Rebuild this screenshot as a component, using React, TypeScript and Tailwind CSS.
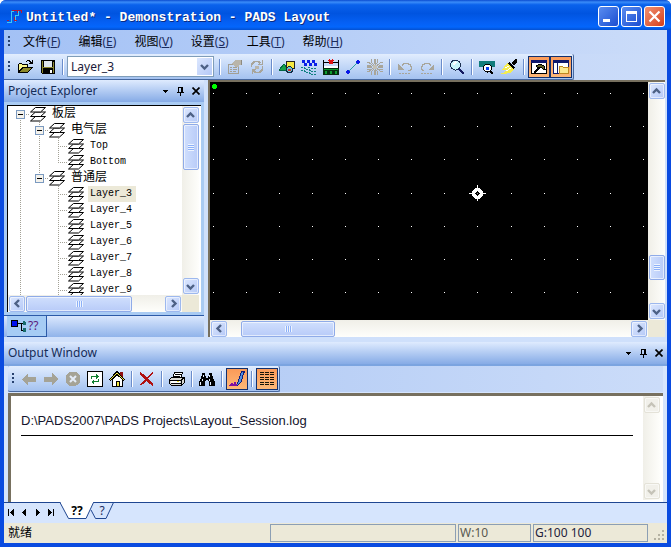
import type { ReactNode } from 'react';

const UI = "font-['Noto_Sans','Noto_Sans_CJK_SC',sans-serif]";

/* ---------- shared pieces ---------- */

type Dir = 'up' | 'down' | 'left' | 'right';

const chevrons: Record<Dir, string> = {
  up: 'M1 6L4.5 2.5L8 6',
  down: 'M1 3L4.5 6.5L8 3',
  left: 'M6 1L2.5 4.5L6 8',
  right: 'M3 1L6.5 4.5L3 8',
};

function Chevron({ dir, color = '#4d6185' }: { dir: Dir; color?: string }) {
  return (
    <svg width="9" height="9" viewBox="0 0 9 9" fill="none" aria-hidden="true">
      <path d={chevrons[dir]} stroke={color} strokeWidth="2.4" />
    </svg>
  );
}

function ScrollButton({ dir, disabled }: { dir: Dir; disabled?: boolean }) {
  const look = disabled
    ? 'border-[#e4e2d8] bg-[#f1f0ea]'
    : 'border-[#9db8ee] bg-gradient-to-br from-[#dce7fe] to-[#b5c9f7]';
  return (
    <button
      type="button"
      aria-label={`Scroll ${dir}`}
      disabled={disabled}
      className={`flex size-4 shrink-0 items-center justify-center rounded-xs border shadow-[inset_0_0_0_1px_#fff8] ${look}`}
    >
      <Chevron dir={dir} color={disabled ? '#c5c3b8' : undefined} />
    </button>
  );
}

function Scrollbar({ vertical, before, thumb, disabled }: { vertical?: boolean; before: string; thumb: string; disabled?: boolean }) {
  return (
    <div
      className={
        vertical
          ? 'flex w-[17px] shrink-0 flex-col items-center bg-gradient-to-r from-[#f0efe8] to-[#fefefb] py-px'
          : 'flex h-[17px] min-w-0 flex-1 items-center bg-gradient-to-b from-[#f0efe8] to-[#fefefb] px-px'
      }
    >
      <ScrollButton dir={vertical ? 'up' : 'left'} disabled={disabled} />
      <div className={`shrink-0 ${before}`} />
      {!disabled && (
        <div
          className={`flex shrink-0 items-center justify-center rounded-xs border border-[#8fabe8] from-[#d0dffd] to-[#b8cbf8] shadow-[inset_0_0_0_1px_#fff9] ${
            vertical ? 'w-4 bg-gradient-to-r' : 'h-4 bg-gradient-to-b'
          } ${thumb}`}
        >
          <div
            className={
              vertical
                ? 'h-[7px] w-[6px] bg-[repeating-linear-gradient(180deg,#eef4fe_0_1px,#8cb0f8_1px_2px)]'
                : 'h-[6px] w-[7px] bg-[repeating-linear-gradient(90deg,#eef4fe_0_1px,#8cb0f8_1px_2px)]'
            }
          />
        </div>
      )}
      <div className="flex-1" />
      <ScrollButton dir={vertical ? 'down' : 'right'} disabled={disabled} />
    </div>
  );
}

function Grip() {
  return (
    <div className="mx-1 h-3 w-[2px] bg-[repeating-linear-gradient(180deg,#27416f_0_2px,transparent_2px_4px)]" />
  );
}

function Separator() {
  return <div className="mx-[3px] h-4 w-[2px] shrink-0 border-l border-[#6a8ccb] bg-white" />;
}

function Tool({ name, on, off, children }: { name: string; on?: boolean; off?: boolean; children: ReactNode }) {
  return (
    <button
      type="button"
      aria-label={name}
      aria-pressed={on}
      disabled={off}
      className={`flex size-[22px] shrink-0 items-center justify-center border ${
        on ? 'border-[#12306e] bg-gradient-to-b from-[#fb9a58] to-[#fdb878]' : 'border-transparent'
      }`}
    >
      <svg width="16" height="16" viewBox="0 0 16 16" fill="none" shapeRendering="crispEdges" aria-hidden="true">
        {children}
      </svg>
    </button>
  );
}

function PanelHeader({ title }: { title: string }) {
  return (
    <header className="flex h-[22px] shrink-0 items-center bg-gradient-to-b from-[#dfebfe] to-[#86abe6] pr-px pl-1">
      <h2 className={`${UI} flex-1 text-[12px] leading-4 text-[#152c57]`}>{title}</h2>
      <button type="button" aria-label="Panel menu" className="flex h-4 w-[15px] items-center justify-center">
        <svg width="5" height="3" shapeRendering="crispEdges"><path d="M0 0H5L2.5 3Z" fill="#000" /></svg>
      </button>
      <button type="button" aria-label="Pin" className="flex h-4 w-[15px] items-center justify-center">
        <svg width="7" height="9" shapeRendering="crispEdges">
          <path d="M1 0h5v5h1v1H4v3H3V6H0V5h1zM2 1v4h2V1z" fill="#000" fillRule="evenodd" />
        </svg>
      </button>
      <button type="button" aria-label="Close panel" className="flex h-4 w-[15px] items-center justify-center">
        <svg width="8" height="8"><path d="M0.5 0.5L7.5 7.5M7.5 0.5L0.5 7.5" stroke="#000" strokeWidth="1.7" /></svg>
      </button>
    </header>
  );
}

/* ---------- title and menus ---------- */

function TitleBar() {
  const box = 'flex size-[21px] items-center justify-center rounded-[3px] border border-white';
  return (
    <header className="flex h-[30px] shrink-0 items-center bg-[linear-gradient(180deg,#0a4bd0_0,#3a8cf8_7%,#0a62ec_16%,#0054e0_45%,#0560f4_75%,#0366fc_90%,#0450d0_100%)] px-[6px] pt-[2px]">
      <svg width="16" height="16" viewBox="0 0 16 16" fill="none" shapeRendering="crispEdges" aria-hidden="true">
        <path d="M1 14.500h4.500V3.500H8" stroke="#3cc8f4" />
        <path d="M9.500 14V7.500h3V2" stroke="#3cc8f4" />
        <path d="M1 12.500h2M6 2.500h5.500V5M12 2.500h3V5M8.500 9v3h2" stroke="#b01c38" />
      </svg>
      <h1 className="ml-1 flex-1 truncate pt-1 font-['Liberation_Mono',monospace] text-[13px] leading-5 font-bold text-white [text-shadow:1px_1px_#0a2a80]">
        Untitled* - Demonstration - PADS Layout
      </h1>
      <div className="flex gap-[2px]">
        <button type="button" aria-label="Minimize" className={`${box} bg-gradient-to-br from-[#5a8cf0] to-[#1c4cd0]`}>
          <svg width="13" height="13"><path d="M1 9h7v3H1z" fill="#fff" /></svg>
        </button>
        <button type="button" aria-label="Maximize" className={`${box} bg-gradient-to-br from-[#5a8cf0] to-[#1c4cd0]`}>
          <svg width="13" height="13" fill="none" shapeRendering="crispEdges">
            <path d="M1.500 2v9.500h10V2" stroke="#fff" /><path d="M1 1h11v3H1z" fill="#fff" />
          </svg>
        </button>
        <button type="button" aria-label="Close" className={`${box} bg-gradient-to-br from-[#f09070] to-[#d43c14]`}>
          <svg width="13" height="13"><path d="M1.500 1.500l10 10M11.500 1.500l-10 10" stroke="#fff" strokeWidth="2.200" /></svg>
        </button>
      </div>
    </header>
  );
}

const menus = [
  ['文件', 'F'],
  ['编辑', 'E'],
  ['视图', 'V'],
  ['设置', 'S'],
  ['工具', 'T'],
  ['帮助', 'H'],
];

function MenuBar() {
  return (
    <nav className="flex h-6 shrink-0 items-center bg-gradient-to-r from-[#a3c1f5] to-[#cbdcf9]">
      <Grip />
      <div className={`${UI} ml-[9px] flex gap-[18px] text-[12px] leading-4 text-black`}>
        {menus.map(([label, key]) => (
          <button key={key} type="button" className="whitespace-nowrap">
            {label}
            <span className="text-[#1b2c5c]">(<u>{key}</u>)</span>
          </button>
        ))}
      </div>
    </nav>
  );
}

function MainToolbar() {
  return (
    <div className="flex h-[26px] shrink-0 bg-gradient-to-r from-[#b4ccf6] to-[#cbdcf9]">
      <div className="flex items-center rounded-r-xs border-r border-b border-[#47689f] bg-gradient-to-b from-[#e2edfe] to-[#a4c2f0] pr-px">
        <Grip />
        <div className="w-px" />
        <Tool name="Open">
          <path d="M0 14V5h1V4h3v1h6v3h5v1h-1v1h-1v1h-1v1h-1v1h-1v1z" fill="#000" />
          <path d="M1 11V5h3v1h5v2H4v1H3v1H2v1z" fill="#f8f48c" />
          <path d="M2 13h8v-1h1v-1h1v-1h1V9H5v1H4v1H3v1H2z" fill="#8c8828" />
          <path d="M8 3V2h1V1h3v1h1v1h1V1h1v4h-4V4h1V3h-1V2H9v1z" fill="#000" />
        </Tool>
        <Tool name="Save">
          <path d="M1 1h14v14H2l-1-1z" fill="#000" />
          <path d="M2 2h1v12H2zM3 8h10v1H3zM13 3h1v11h-1z" fill="#8c8830" />
          <path d="M4 2h8v6H4z" fill="#dfe6ee" />
          <path d="M10 11h2v3h-2z" fill="#fff" />
        </Tool>
        <Separator />
        <div className="relative mr-[2px] flex h-[21px] w-[147px] border border-[#7f9db9] bg-white">
          <select aria-label="Active layer" className={`${UI} w-full appearance-none bg-transparent pl-[3px] text-[12px] leading-4 text-[#1b1b3a]`}>
            <option>Layer_3</option>
          </select>
          <span className="pointer-events-none absolute inset-y-px right-px flex w-[15px] items-center justify-center bg-gradient-to-br from-[#dce7fe] to-[#b5c9f7]">
            <Chevron dir="down" />
          </span>
        </div>
        <Separator />
        <Tool name="Properties" off>
          <path d="M1.500 5.500h10v9h-10zM3 8.500h2M3 10.500h2M3 12.500h2M6 8.500h4M6 10.500h4M6 12.500h3" stroke="#a29f94" />
          <path d="M5 5l3-4h6v5h-2v2H8z" fill="#b9b5aa" />
          <path d="M14.500 1v5" stroke="#8d8a80" />
        </Tool>
        <Tool name="Cycle" off>
          <path d="M2.500 8V5.500l3-3h4l2 2M13.500 7v3.500l-3 3h-4l-2-2" stroke="#a8a59a" strokeWidth="1.600" />
          <path d="M9 5.500h4V1M7 10.500H3V15" stroke="#a8a59a" />
          <path d="M6 7h4v3H6z" fill="#b9b5aa" />
        </Tool>
        <Separator />
        <Tool name="Drafting">
          <path d="M0 11L5 5l5 6z" fill="#18a048" stroke="#064" />
          <path d="M7.500 2.500h8v7h-8z" fill="#f4e840" stroke="#222" />
          <circle cx="10.500" cy="10.500" r="3" fill="#68c8c8" stroke="#124" />
          <path d="M9 10h3v2H9z" fill="#d03030" />
        </Tool>
        <Tool name="Design">
          <path d="M1 1h3v3H1zM6 1h3v3H6zM11 1h3v3h-3zM3 4h3v3H3zM8 4h3v3H8zM13 4h3v3h-3z" fill="#0a20e8" />
          <path d="M0 8.500h3l2 2h3l2 2h5M0 11.500h3l2 2h3l2 2h5M7 8.500h2l2 1h5" stroke="#108080" strokeDasharray="2 1" />
        </Tool>
        <Tool name="Dimensioning">
          <path d="M.5 1v8M15.500 1v8M1 3.500h5M10 3.500h5" stroke="#000" />
          <path d="M6 1l4 4M10 1L6 5" stroke="#e01010" strokeWidth="1.500" />
          <path d="M1 7h14v2H1z" fill="#fff" />
          <path d="M0 9h16v7H0z" fill="#042c10" />
          <path d="M1 10h14v1H1zM2 12h2v3H2zM7 12h2v3H7zM12 12h2v3h-2z" fill="#0c9c30" />
        </Tool>
        <Tool name="Route">
          <path d="M3 13L13 3" stroke="#2aa0a0" shapeRendering="auto" />
          <path d="M1 12h1v-1h2v1h1v2H4v1H2v-1H1zM11 2h1V1h2v1h1v2h-1v1h-2V4h-1z" fill="#0a18e8" />
        </Tool>
        <Tool name="Fanout" off>
          <path d="M7.500 0v5M7.500 11v5M0 8h5M11 8h5" stroke="#a8a59a" strokeWidth="2" />
          <path d="M4.500 0v3l2 3M10.500 0v3l-2 3M4.500 16v-3l2-3M10.500 16v-3l-2-3M0 3.500h2l4 3M0 12.500h2l4-3M16 3.500h-2l-4 3M16 12.500h-2l-4-3M0 6h4M12 6h4M0 10.500h4M12 10.500h4" stroke="#a8a59a" />
          <path d="M6 6h4v4H6z" fill="#c2c0b6" />
        </Tool>
        <Separator />
        <Tool name="Undo" off>
          <path d="M5 7V5h1V4h5v1h2v2h1v3h-1v1h-2" stroke="#a8a59a" />
          <path d="M1 5v6h6z" fill="#a8a59a" />
          <path d="M2 14.500h12" stroke="#a8a59a" strokeDasharray="2 1" />
        </Tool>
        <Tool name="Redo" off>
          <path d="M11 7V5h-1V4H5v1H3v2H2v3h1v1h2" stroke="#a8a59a" />
          <path d="M15 5v6H9z" fill="#a8a59a" />
          <path d="M2 14.500h12" stroke="#a8a59a" strokeDasharray="2 1" />
        </Tool>
        <Separator />
        <Tool name="Zoom">
          <circle cx="6.500" cy="6" r="5" fill="#c8f4f8" stroke="#1c3050" />
          <path d="M4 6l3-3" stroke="#fff" strokeWidth="2" />
          <path d="M10 10l5 5" stroke="#141a60" strokeWidth="2.500" />
        </Tool>
        <Separator />
        <Tool name="Board view">
          <path d="M0 2h16v6H0z" fill="#107c7c" />
          <circle cx="8.500" cy="9" r="4" fill="#fff" stroke="#000" />
          <path d="M7 8h3v3H7z" fill="#0a40f0" />
          <path d="M11 12l3 3" stroke="#000" strokeWidth="2" />
        </Tool>
        <Tool name="Redraw">
          <path d="M11 4l3-4h2v3l-3 4z" fill="#000" />
          <path d="M8 3l6 5-2 2-6-5z" fill="#000" />
          <path d="M6 4l7 6-4 4H2l3-3H1z" fill="#f4ec50" />
          <path d="M4 9l4-2M5 12l5-3" stroke="#fff" />
          <path d="M0 14h6v1H0z" fill="#f4ec50" />
        </Tool>
        <Separator />
        <Tool name="Output window" on>
          <path d="M.5 1.500h15v13H.5z" fill="#fff" stroke="#000" />
          <path d="M0 1h16v3H0z" fill="#10186c" />
          <path d="M5 7l4-2 4 2 1 3h-2l-2-2-2 1-2-1z" fill="#5a5c20" stroke="#000" />
          <path d="M8.500 8l-5 6" stroke="#000" strokeWidth="2" />
        </Tool>
        <Tool name="Project explorer" on>
          <path d="M.5 1.500h15v13H.5z" fill="#fff" stroke="#10186c" />
          <path d="M0 1h16v3H0z" fill="#10186c" />
          <path d="M4.500 3v12" stroke="#10186c" />
          <path d="M6.500 14.500v-7h3l1 1h5v6z" fill="#fbe890" stroke="#c08820" />
        </Tool>
      </div>
    </div>
  );
}

/* ---------- project explorer ---------- */

type Guide = 'line' | 'blank' | 'tee' | 'elbow' | 'root' | 'mid' | 'last';

const guidePaths: Record<Guide, string> = {
  line: 'M9.500 0V16',
  blank: '',
  tee: 'M9.500 0V16M9 8.500H19',
  elbow: 'M9.500 0V8M9 8.500H19',
  root: 'M9.500 8V16M9 8.500H19',
  mid: 'M9.500 0V16M9 8.500H19',
  last: 'M9.500 0V8M9 8.500H19',
};

const rows: { guides: Guide[]; label: string; selected?: boolean }[] = [
  { guides: ['root'], label: '板层' },
  { guides: ['line', 'mid'], label: '电气层' },
  { guides: ['line', 'line', 'tee'], label: 'Top' },
  { guides: ['line', 'line', 'elbow'], label: 'Bottom' },
  { guides: ['line', 'last'], label: '普通层' },
  { guides: ['line', 'blank', 'tee'], label: 'Layer_3', selected: true },
  { guides: ['line', 'blank', 'tee'], label: 'Layer_4' },
  { guides: ['line', 'blank', 'tee'], label: 'Layer_5' },
  { guides: ['line', 'blank', 'tee'], label: 'Layer_6' },
  { guides: ['line', 'blank', 'tee'], label: 'Layer_7' },
  { guides: ['line', 'blank', 'tee'], label: 'Layer_8' },
  { guides: ['line', 'blank', 'tee'], label: 'Layer_9' },
];

function GuideCell({ kind }: { kind: Guide }) {
  const expander = kind === 'root' || kind === 'mid' || kind === 'last';
  return (
    <svg width="19" height="16" className="shrink-0" fill="none" shapeRendering="crispEdges" aria-hidden="true">
      <path d={guidePaths[kind]} stroke="#a3a196" strokeDasharray="1 1" />
      {expander && (
        <>
          <path d="M5.500 4.500h8v8h-8z" fill="#f4f2ec" stroke="#7b9ac0" />
          <path d="M7 8.500h5" stroke="#000" />
        </>
      )}
    </svg>
  );
}

function LayersIcon() {
  return (
    <svg width="16" height="16" className="shrink-0" fill="#fff" stroke="#000" aria-hidden="true">
      <path d="M5.500 10.500H15.500L10.500 15H0.500Z" />
      <path d="M5.500 6H15.500L10.500 10.500H0.500Z" />
      <path d="M5.500 1.500H15.500L10.500 6H0.500Z" />
    </svg>
  );
}

function ProjectExplorer() {
  return (
    <section className="flex w-[200px] shrink-0 flex-col">
      <PanelHeader title="Project Explorer" />
      <div className="flex min-h-0 flex-1 flex-col border-[3px] border-[#a9cbf3] bg-white">
        <div className="flex min-h-0 flex-1 flex-col border-t border-l border-black pr-[2px]">
          <div className="flex min-h-0 flex-1">
            <ul className="min-w-0 flex-1 overflow-hidden pl-[3px]">
              {rows.map((row) => (
                <li key={row.label} className="flex h-4 items-center">
                  {row.guides.map((kind, i) => (
                    <GuideCell key={i} kind={kind} />
                  ))}
                  <LayersIcon />
                  <span
                    className={`ml-1 px-[2px] font-['Liberation_Mono','Noto_Sans_CJK_SC',monospace] leading-4 text-black ${
                      row.guides.length < 3 ? 'text-[12px]' : 'text-[10px]'
                    } ${row.selected ? 'bg-[#ece9d8] pr-1' : ''}`}
                  >
                    {row.label}
                  </span>
                </li>
              ))}
            </ul>
            <Scrollbar vertical before="h-px" thumb="h-[46px]" />
          </div>
          <div className="flex bg-[#ece9d8] pr-[17px]">
            <Scrollbar before="w-px" thumb="w-[106px]" />
          </div>
        </div>
      </div>
      <div className="flex h-[22px] shrink-0 border-t border-[#2c5aa8] bg-gradient-to-b from-[#dbe8fd] to-[#90b3ea] pl-[3px]">
        <button
          type="button"
          className={`${UI} flex w-10 items-center gap-px border-r border-b border-[#2c5aa8] bg-[#a6ccf4] pl-1 text-[12px] leading-4 text-[#5c1c7c]`}
        >
          <svg width="16" height="14" fill="none" shapeRendering="crispEdges" aria-hidden="true">
            <path d="M.5 1.500h6v6h-6z" fill="#0010f0" stroke="#000" />
            <path d="M7 4.500h3v7h3M10 4.500h3" stroke="#000" />
            <path d="M12 2h2v1h1v3h-3zM12 9h3v4h-3z" fill="#186c6c" />
          </svg>
          ??
        </button>
      </div>
    </section>
  );
}

/* ---------- layout canvas ---------- */

const gridX = [3, 36, 69, 102, 135, 168, 201, 234, 267, 301, 334, 367, 400, 433];
const gridY = [11, 44, 77, 111, 144, 177, 210];

function LayoutCanvas() {
  return (
    <section className="mr-[2px] ml-1 flex min-w-0 flex-1 flex-col border-t-2 border-l-2 border-[#77705f]" aria-label="Board layout">
      <div className="flex min-h-0 flex-1">
        <div className="min-w-0 flex-1 overflow-hidden bg-black">
          <svg width="438" height="238" fill="#fff" shapeRendering="crispEdges">
            <path d="M3 2h3v1h1v3H6v1H3V6H2V3h1z" fill="#00ff00" />
            {gridY.map((y) => gridX.map((x) => <rect key={`${x}-${y}`} x={x} y={y} width="1" height="1" />))}
            <path d="M267 103h1v16h-1zM259 111h17v1h-17z" />
            <path d="M265 106h5v1h1v1h1v1h1v5h-1v1h-1v1h-1v1h-5v-1h-1v-1h-1v-1h-1v-5h1v-1h1v-1h1z" />
            <path d="M267 109h1v1h1v1h1v1h-1v1h-1v1h-1v-1h-1v-1h-1v-1h1v-1h1z" fill="#000" />
            <path d="M267 111h1v1h-1z" fill="#888" />
          </svg>
        </div>
        <Scrollbar vertical before="h-[156px]" thumb="h-[25px]" />
      </div>
      <div className="flex bg-[#ece9d8] pr-[17px]">
        <Scrollbar before="w-[14px]" thumb="w-[94px]" />
      </div>
    </section>
  );
}

/* ---------- output window ---------- */

function OutputToolbar() {
  return (
    <div className="flex h-[26px] shrink-0 bg-gradient-to-r from-[#aac5f3] to-[#cbdcf9]">
      <div className="flex items-center rounded-xs border-r border-b border-[#47689f] bg-gradient-to-b from-[#e2edfe] to-[#a4c2f0] pr-px">
        <Grip />
        <Tool name="Back" off><path d="M1 8l6-6v4h8v5H7v4z" fill="#a5a396" /></Tool>
        <Tool name="Forward" off><path d="M15 8L9 2v4H1v5h8v4z" fill="#a5a396" /></Tool>
        <Tool name="Stop" off>
          <circle cx="8" cy="8" r="7.500" fill="#a5a396" />
          <path d="M5 5l6 6M11 5l-6 6" stroke="#e4ecf8" strokeWidth="2" shapeRendering="auto" />
        </Tool>
        <Tool name="Refresh">
          <path d="M.5 .5h15v15H.5z" fill="#fff" stroke="#000" />
          <path d="M4.500 8V5.500H10M11.500 8v2.500H6" stroke="#108030" />
          <path d="M9 2l3 3.500L9 8zM7 8l-3 3 3 3z" fill="#108030" />
        </Tool>
        <Tool name="Home">
          <path d="M11 1h3v6h-3z" fill="#901010" />
          <path d="M3.500 8v7.500h10V8L8.500 3z" fill="#fff" stroke="#000" />
          <path d="M0.500 8.500l7.500-8 7.500 8-1 1L8 3.500l-6.500 6z" fill="#f4e840" stroke="#000" />
          <path d="M7.500 10.500h3v5h-3z" fill="#f4e840" stroke="#000" />
        </Tool>
        <Separator />
        <Tool name="Delete">
          <path d="M1 2l13 12" stroke="#b01010" strokeWidth="2.600" />
          <path d="M14 1L2 14" stroke="#b01010" strokeWidth="1.400" />
          <path d="M3 13l4-4" stroke="#b01010" strokeWidth="2.500" />
        </Tool>
        <Separator />
        <Tool name="Print">
          <path d="M5.500 1.500h8l-2 6h-8z" fill="#fff" stroke="#000" />
          <path d="M6 3.500h6M5 5.500h6" stroke="#000" />
          <path d="M.5 8.500l2-2h13v5l-3 3H2.500l-2-2z" fill="#d8d8d4" stroke="#000" />
          <path d="M1 9.500h11.500V14M12 9l3-2M2 12.500h10" stroke="#000" />
          <path d="M2 10h9v2H2z" fill="#fff" />
          <path d="M8 10h2v1H8z" fill="#e8dc30" />
        </Tool>
        <Separator />
        <Tool name="Find">
          <path d="M3 2h3v3h1v2h2V5h1V2h3v3h1v3h1v2h1v5h-6v-5H9v-1H7v1H6v5H0v-5h1V8h1V5h1z" fill="#000" />
          <path d="M4 4h1v2H4zM10 4h1v2h-1zM3 8h1v2H3zM10 8h1v2h-1zM1 11h1v3H1zM11 11h1v3h-1z" fill="#e8f0fc" />
        </Tool>
        <Separator />
        <Tool name="Session log" on>
          <path d="M12.500 .5h3l-1 2-2 8-4 4h-1l2-5z" fill="#5090e0" stroke="#101c78" />
          <path d="M1 13.500h1v-1h1v1h2v-2h1v2h2" stroke="#8010a0" />
          <path d="M0 14h8v1H0z" fill="#8010a0" />
        </Tool>
        <Separator />
        <Tool name="Report" on>
          <path d="M1 1.500h14M1 3.500h14M1 6.500h14M1 8.500h14M1 11.500h14M1 13.500h14" stroke="#181408" strokeDasharray="4 1" />
        </Tool>
      </div>
    </div>
  );
}

function SheetTabs() {
  const nav = [
    ['First', 'M0 0h1v7H0zM6 0v7L2 3.500z'],
    ['Previous', 'M5 0v7L1 3.500z'],
    ['Next', 'M2 0v7l4-3.500z'],
    ['Last', 'M1 0v7l4-3.500zM6 0h1v7H6z'],
  ];
  return (
    <div className="flex h-[21px] shrink-0 items-start border-t border-[#1f4691] bg-[#d6e5fd] pl-1">
      {nav.map(([name, d]) => (
        <button key={name} type="button" aria-label={`${name} sheet`} className="mt-[6px] flex w-[13px] justify-start">
          <svg width="7" height="7" shapeRendering="crispEdges"><path d={d} /></svg>
        </button>
      ))}
      <button type="button" className={`${UI} relative -mt-px h-[17px] w-[34px] text-[12px] leading-4 font-bold text-black`}>
        <svg className="absolute inset-0" width="34" height="17" fill="#fff" aria-hidden="true">
          <path d="M0 0.500L8.500 16.500H26L33.500 0.500" stroke="#1f4691" /><path d="M1 0h32v1H1z" />
        </svg>
        <span className="relative">??</span>
      </button>
      <button type="button" className={`${UI} relative -mt-px -ml-1 h-[17px] w-6 text-[12px] leading-4 text-[#1b2c5c]`}>
        <svg className="absolute inset-0" width="24" height="17" fill="none" aria-hidden="true">
          <path d="M1 8L5.500 16.500H16L23.500 0.500" stroke="#1f4691" />
        </svg>
        <span className="relative">?</span>
      </button>
    </div>
  );
}

function OutputWindow() {
  return (
    <section className="mt-[5px] flex shrink-0 flex-col">
      <PanelHeader title="Output Window" />
      <div className="border-t-2 border-[#7ba4e0] bg-[#d6e5fd] px-1">
        <OutputToolbar />
        <div className="mt-px flex h-[109px] border-t-[3px] border-l-[3px] border-[#77705f] bg-white pr-[3px] pb-[2px]">
          <div className="min-w-0 flex-1 px-[10px] pt-4">
            <p className="truncate border-b border-black pb-[6px] font-['Liberation_Sans',sans-serif] text-[13px] leading-[17px] text-[#14142c]">
              D:\PADS2007\PADS Projects\Layout_Session.log
            </p>
          </div>
          <Scrollbar vertical before="h-px" thumb="" disabled />
        </div>
      </div>
      <SheetTabs />
    </section>
  );
}

function StatusBar() {
  const cell = 'h-[18px] border border-[#8c9fb4] px-px leading-4';
  return (
    <footer className={`${UI} flex h-5 shrink-0 items-center gap-[2px] bg-[#ece9d8] pl-1 text-[12px] text-[#22223c]`}>
      <span className="w-[260px] leading-4 text-black">就绪</span>
      <span className={`${cell} flex-1`} />
      <span className={`${cell} w-[73px] text-[#585850]`}>W:10</span>
      <span className={`${cell} w-[115px]`}>G:100 100</span>
      <svg width="16" height="18" fill="#b5b2a2" className="ml-px" aria-hidden="true">
        <path d="M11 6h2v2h-2zM7 10h2v2H7zM11 10h2v2h-2zM3 14h2v2H3zM7 14h2v2H7zM11 14h2v2h-2z" />
      </svg>
    </footer>
  );
}

export default function App() {
  return (
    <div className="bg-white">
      <div className="flex h-screen min-h-[480px] flex-col overflow-hidden rounded-t-[6px] bg-[#0a4be0]">
        <TitleBar />
        <div className="mx-1 mb-1 flex min-h-0 flex-1 flex-col bg-[#cfe0fb]">
          <MenuBar />
          <MainToolbar />
          <main className="flex min-h-0 flex-1">
            <ProjectExplorer />
            <LayoutCanvas />
          </main>
          <OutputWindow />
          <StatusBar />
        </div>
      </div>
    </div>
  );
}
